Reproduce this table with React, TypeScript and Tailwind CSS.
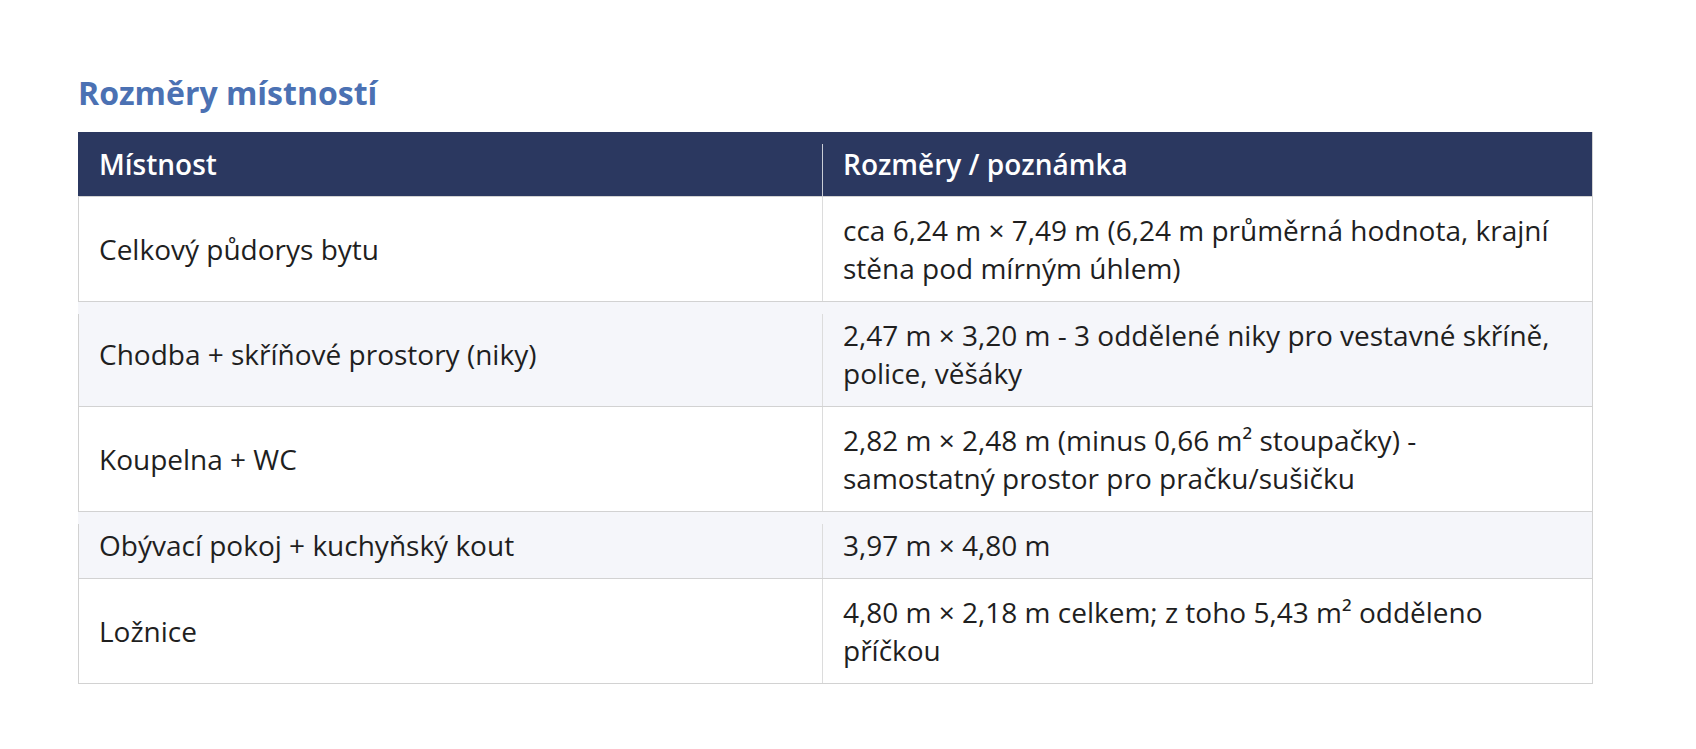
const rows = [
  {
    room: "Celkový půdorys bytu",
    note: "cca 6,24 m × 7,49 m (6,24 m průměrná hodnota, krajní stěna pod mírným úhlem)",
  },
  {
    room: "Chodba + skříňové prostory (niky)",
    note: "2,47 m × 3,20 m - 3 oddělené niky pro vestavné skříně, police, věšáky",
  },
  {
    room: "Koupelna + WC",
    note: "2,82 m × 2,48 m (minus 0,66 m² stoupačky) - samostatný prostor pro pračku/sušičku",
  },
  {
    room: "Obývací pokoj + kuchyňský kout",
    note: "3,97 m × 4,80 m",
  },
  {
    room: "Ložnice",
    note: "4,80 m × 2,18 m celkem; z toho 5,43 m² odděleno příčkou",
  },
];

export default function App() {
  return (
    <div className="min-h-screen bg-white font-['Open_Sans',sans-serif] pl-[78px] pr-[104px] pt-[73px]">
      <h2 className="text-[32px] leading-[40px] font-bold text-[#4b71b3] mb-[19px]">Rozměry místností</h2>

      <div className="w-[1515px] border-r border-[#d2d2d2] text-[28px] leading-[38px] text-[#1f1f1f]">
        <div className="flex bg-[#2b3860] text-white font-semibold border-b border-[#d2d2d2]">
          <div className="w-[744px] px-[21px] py-[13px]">Místnost</div>
          <div className="flex-1 mt-[12px] pt-[1px] pb-[13px] px-[20px] border-l border-[#c9cdd6]">
            Rozměry / poznámka
          </div>
        </div>

        {rows.map((row, i) => {
          const striped = i % 2 === 1;
          return (
            <div
              key={row.room}
              className={
                striped
                  ? "flex bg-[#f5f6fa] border-b border-[#d2d2d2]"
                  : "flex bg-white border-b border-[#d2d2d2]"
              }
            >
              <div
                className={
                  striped
                    ? "w-[744px] flex items-center px-[20px] mt-[12px] pt-[2px] pb-[14px] border-l border-[#d2d2d2]"
                    : "w-[744px] flex items-center px-[20px] py-[14px] border-l border-[#d2d2d2]"
                }
              >
                {row.room}
              </div>
              <div
                className={
                  striped
                    ? "flex-1 flex items-center px-[20px] mt-[12px] pt-[2px] pb-[14px] border-l border-[#dcdcdc]"
                    : "flex-1 flex items-center px-[20px] py-[14px] border-l border-[#dcdcdc]"
                }
              >
                {row.note}
              </div>
            </div>
          );
        })}
      </div>
    </div>
  );
}
